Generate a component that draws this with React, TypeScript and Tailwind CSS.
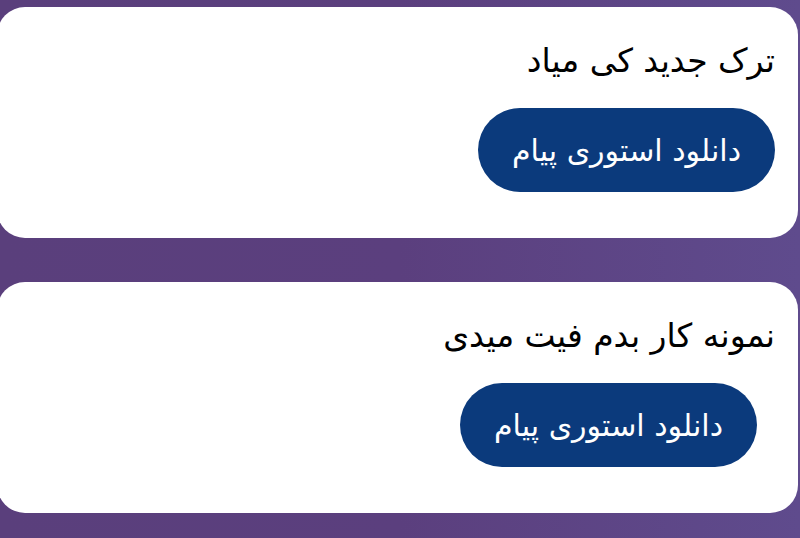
const cards = [
  { title: 'ترک جدید کی میاد', offset: 'mr-0' },
  { title: 'نمونه کار بدم فیت میدی', offset: 'mr-[18px]' },
];

function StoryCard({ title, offset }: { title: string; offset: string }) {
  return (
    <div className="h-[231px] -ml-[3px] mr-[2px] rounded-[28px] bg-white pt-[32px] pr-[23px]">
      <h3 className="text-[33px] leading-[44px] text-black">{title}</h3>
      <div className="mt-[25px] flex">
        <button
          className={`h-[84px] w-[297px] rounded-full bg-[#0b3a7c] text-[30px] text-white ${offset}`}
        >
          دانلود استوری پیام
        </button>
      </div>
    </div>
  );
}

export default function App() {
  return (
    <div
      dir="rtl"
      className="h-[538px] w-[800px] overflow-hidden bg-gradient-to-r from-[#5a3f7c] via-[#5b3f7e] to-[#5f4b8d] pt-[7px] font-['DejaVu_Sans',sans-serif]"
    >
      <div className="flex flex-col gap-[44px]">
        {cards.map((c) => (
          <StoryCard key={c.title} title={c.title} offset={c.offset} />
        ))}
      </div>
    </div>
  );
}
